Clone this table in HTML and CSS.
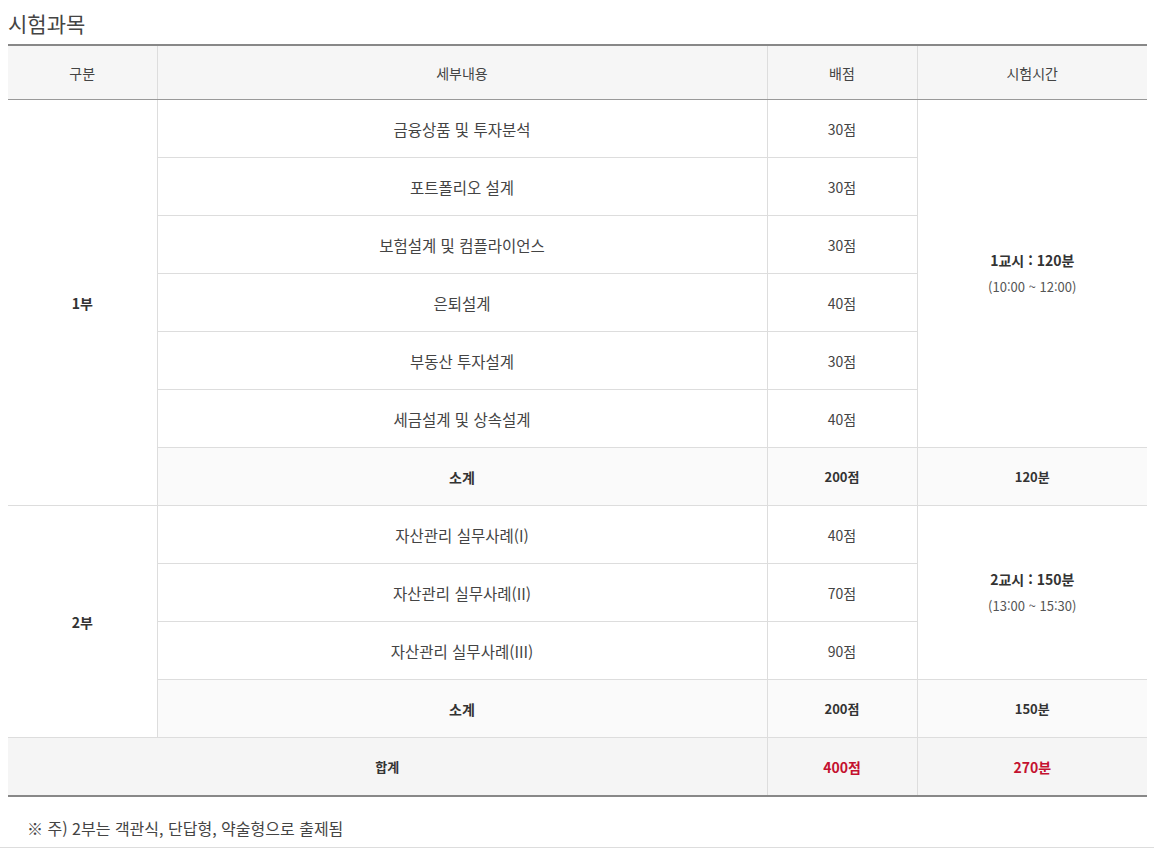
FILE: index.html
```html
<!DOCTYPE html>
<html lang="ko">
<head>
<meta charset="utf-8">
<title>시험과목</title>
<link rel="stylesheet" href="styles.css">
</head>
<body>
<h2 class="title">시험과목</h2>
<table class="exam">
  <colgroup>
    <col class="c1"><col class="c2"><col class="c3"><col class="c4">
  </colgroup>
  <thead>
    <tr><th>구분</th><th>세부내용</th><th>배점</th><th>시험시간</th></tr>
  </thead>
  <tbody>
    <tr>
      <td rowspan="7" class="part">1부</td>
      <td class="detail">금융상품 및 투자분석</td><td>30점</td>
      <td rowspan="6" class="time"><strong>1교시 : 120분</strong><span>(10:00 ~ 12:00)</span></td>
    </tr>
    <tr><td class="detail">포트폴리오 설계</td><td>30점</td></tr>
    <tr><td class="detail">보험설계 및 컴플라이언스</td><td>30점</td></tr>
    <tr><td class="detail">은퇴설계</td><td>40점</td></tr>
    <tr><td class="detail">부동산 투자설계</td><td>30점</td></tr>
    <tr><td class="detail">세금설계 및 상속설계</td><td>40점</td></tr>
    <tr class="sub"><td>소계</td><td>200점</td><td>120분</td></tr>
    <tr class="group">
      <td rowspan="4" class="part">2부</td>
      <td class="detail">자산관리 실무사례(I)</td><td>40점</td>
      <td rowspan="3" class="time"><strong>2교시 : 150분</strong><span>(13:00 ~ 15:30)</span></td>
    </tr>
    <tr><td class="detail">자산관리 실무사례(II)</td><td>70점</td></tr>
    <tr><td class="detail">자산관리 실무사례(III)</td><td>90점</td></tr>
    <tr class="sub"><td>소계</td><td>200점</td><td>150분</td></tr>
    <tr class="total"><td colspan="2">합계</td><td class="red">400점</td><td class="red">270분</td></tr>
  </tbody>
</table>
<p class="note">※ 주) 2부는 객관식, 단답형, 약술형으로 출제됨</p>
</body>
</html>
```

FILE: styles.css
```css
html, body {
  margin: 0;
  padding: 0;
  background: #fff;
}
body {
  padding: 8px 8px 0;
  font-family: "Noto Sans CJK KR", "Noto Sans", sans-serif;
  color: #333;
}
.title {
  margin: 0;
  height: 36px;
  font-size: 21px;
  font-weight: 400;
  line-height: 30px;
  color: #444;
}
.exam {
  width: 1139px;
  border-collapse: collapse;
  table-layout: fixed;
  border-top: 2px solid #888;
  border-bottom: 2px solid #888;
  font-size: 14px;
  color: #444;
}
.c1 { width: 149px; }
.c2 { width: 610px; }
.c3 { width: 150px; }
.c4 { width: 230px; }
.exam th {
  height: 53px;
  padding: 0;
  background: #f6f6f6;
  font-weight: 400;
  font-size: 14px;
  color: #444;
  border-left: 1px solid #ddd;
  border-bottom: 1px solid #999;
}
.exam th:first-child { border-left: 0; }
.exam td {
  height: 57px;
  padding: 0;
  text-align: center;
  vertical-align: middle;
  border: 1px solid #ddd;
}
.exam td.detail {
  font-size: 15.5px;
  color: #444;
}
.exam td.part {
  border-left: 0;
  font-weight: 700;
  color: #333;
}
.exam td:last-child { border-right: 0; }
.exam td.time strong {
  display: block;
  font-weight: 700;
  color: #333;
  line-height: 22px;
}
.exam td.time span {
  display: block;
  font-size: 13px;
  color: #555;
  line-height: 22px;
  margin-top: 5px;
}
.exam tr.sub td {
  background: #fafafa;
  border-top: 1px solid #999;
  font-weight: 700;
  font-size: 13px;
  color: #333;
}
.exam tr.sub td:first-child { font-size: 14px; }
.exam tr.group td {
  border-top: 1px solid #999;
}
.exam tr.total td {
  background: #f5f5f5;
  border-top: 1px solid #999;
  border-left: 0;
  font-weight: 700;
  font-size: 13px;
  color: #333;
}
.exam tr.total td + td { border-left: 1px solid #ddd; }
.exam tr.total td.red { color: #c4112f; font-size: 14px; }
.note {
  margin: 0 -8px;
  padding: 21px 0 0 27px;
  height: 29px;
  font-size: 16px;
  line-height: 20px;
  color: #444;
  border-bottom: 1px solid #ddd;
}
```
